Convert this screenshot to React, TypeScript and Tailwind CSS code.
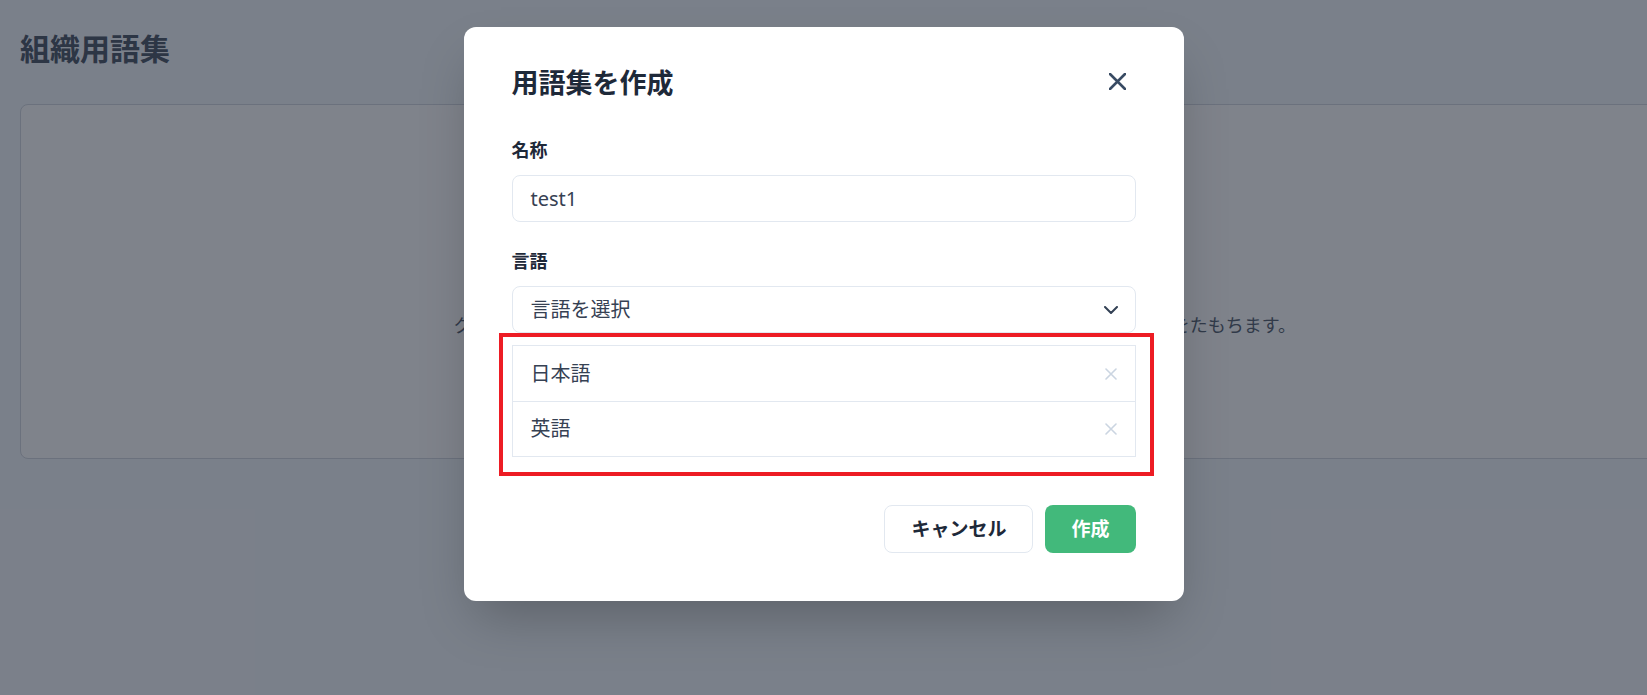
import React from "react";

function CloseIcon() {
  return (
    <svg width="17" height="17" viewBox="0 0 17 17" fill="none">
      <path d="M1 1l15 15M16 1L1 16" stroke="#384b63" strokeWidth="2.6" strokeLinecap="round" />
    </svg>
  );
}

function Chevron() {
  return (
    <svg width="14" height="8" viewBox="0 0 14 8" fill="none">
      <path d="M1 1l6 6 6-6" stroke="#334155" strokeWidth="2" strokeLinecap="round" strokeLinejoin="round" />
    </svg>
  );
}

function SmallX() {
  return (
    <svg width="12" height="12" viewBox="0 0 12 12" fill="none">
      <path d="M1 1l10 10M11 1L1 11" stroke="#cbd5e1" strokeWidth="1.6" strokeLinecap="round" />
    </svg>
  );
}

const languages = ["日本語", "英語"];

export default function App() {
  return (
    <div className="relative h-[695px] w-full overflow-hidden bg-[#f5f8fc] font-['Noto_Sans','Noto_Sans_CJK_JP',sans-serif]">
      {/* page behind the dialog */}
      <div className="px-5 pt-[29px]">
        <h1 className="text-[30px] font-bold leading-[40px] text-[#5a6472]">組織用語集</h1>
        <div className="mt-[35px] h-[355px] w-[1710px] rounded-lg border border-[#d6dbe2] bg-white pt-[206px] text-center">
          <p className="text-[18px] leading-[28px] text-[#626c7a]">
            グロッサリーを登録すると、翻訳時に指定した用語を使用して、組織全体で訳語の一貫性をたもちます。
          </p>
        </div>
      </div>

      {/* overlay */}
      <div className="absolute inset-0 flex items-start justify-center bg-[#000818]/50 pt-[27px]">
        <div className="w-[720px] rounded-xl bg-white px-12 pb-12 pt-10 shadow-2xl">
          <div className="flex h-8 items-center justify-between">
            <h2 className="text-[27px] font-bold leading-8 text-gray-800">用語集を作成</h2>
            <button className="-mt-1 flex h-9 w-9 items-center justify-center">
              <CloseIcon />
            </button>
          </div>

          <label className="mt-[38px] block text-[18px] font-bold leading-[27px] text-gray-800">名称</label>
          <div className="mt-[11px] flex h-[47px] items-center rounded-lg border border-slate-200 px-[18px] text-[20px] text-gray-700">
            test1
          </div>

          <label className="mt-[26px] block text-[18px] font-bold leading-[27px] text-gray-800">言語</label>
          <div className="mt-[11px] flex h-[47px] items-center justify-between rounded-lg border border-slate-200 pl-[18px] pr-[17px] text-[20px] text-gray-700">
            <span>言語を選択</span>
            <Chevron />
          </div>

          <div className="relative mt-3">
            <div className="border border-slate-200">
              {languages.map((lang, i) => (
                <div
                  key={lang}
                  className={
                    "flex h-[55px] items-center justify-between pl-[18px] pr-[18px] text-[20px] text-gray-700" +
                    (i > 0 ? " border-t border-slate-200" : "")
                  }
                >
                  <span>{lang}</span>
                  <SmallX />
                </div>
              ))}
            </div>
            <div className="pointer-events-none absolute -bottom-[19px] -left-[13px] -right-[18px] -top-[12px] border-4 border-[#ed1c24]" />
          </div>

          <div className="mt-12 flex justify-end gap-3">
            <button className="h-12 rounded-lg border border-slate-200 bg-white px-[26px] text-[19px] font-bold text-gray-800">
              キャンセル
            </button>
            <button className="h-12 rounded-lg bg-[#42b97b] px-[26px] text-[19px] font-bold text-white">
              作成
            </button>
          </div>
        </div>
      </div>
    </div>
  );
}
